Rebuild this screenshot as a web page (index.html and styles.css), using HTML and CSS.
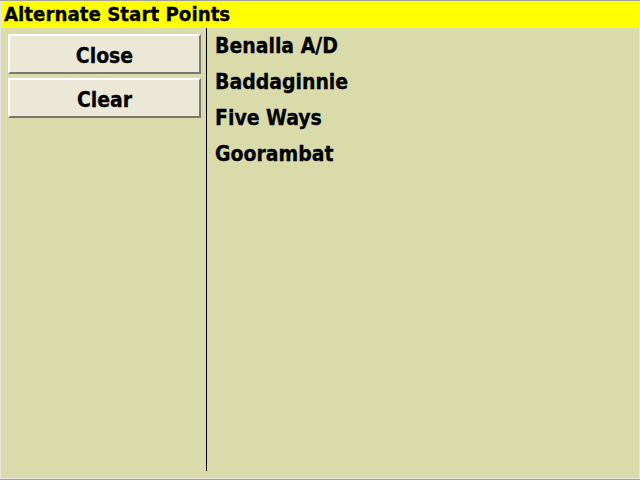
FILE: index.html
```html
<!DOCTYPE html>
<html>
<head>
<meta charset="utf-8">
<link rel="stylesheet" href="styles.css">
</head>
<body>
<div class="window">
  <div class="title">Alternate Start Points</div>
  <div class="content">
    <div class="side">
      <button class="btn">Close</button>
      <button class="btn">Clear</button>
    </div>
    <div class="divider"></div>
    <ul class="list">
      <li>Benalla A/D</li>
      <li>Baddaginnie</li>
      <li>Five Ways</li>
      <li>Goorambat</li>
    </ul>
  </div>
</div>
</body>
</html>
```
FILE: styles.css
```css
html, body {
  margin: 0;
  padding: 0;
  background: #a0a0a0;
  width: 640px;
  height: 480px;
  overflow: hidden;
}
.window {
  margin-top: 1px;
  width: 638px;
  height: 477px;
  border-left: 1px solid #e6e6e0;
  border-right: 1px solid #e6e6e0;
  border-bottom: 1px solid #e6e6e0;
  background: #d9dbab;
  display: flex;
  flex-direction: column;
  font-family: "DejaVu Sans Condensed", "DejaVu Sans", sans-serif;
  font-weight: bold;
  color: #000;
  -webkit-text-stroke: 0.3px #000;
}
.title {
  height: 27px;
  background: #ffff00;
  font-size: 20.3px;
  line-height: 27px;
  padding-left: 3px;
}
.content {
  flex: 1;
  display: flex;
  padding-bottom: 7px;
}
.side {
  width: 205px;
  display: flex;
  flex-direction: column;
  padding: 6px 5px 0 7px;
  box-sizing: border-box;
  gap: 4px;
}
.btn {
  height: 40px;
  width: 193px;
  background: #ebe8d8;
  border: none;
  border-top: 2px solid #ffffff;
  border-left: 2px solid #ffffff;
  border-right: 2px solid #77776f;
  border-bottom: 2px solid #77776f;
  font-family: "DejaVu Sans Condensed", "DejaVu Sans", sans-serif;
  font-weight: bold;
  font-size: 21px;
  color: #000;
  -webkit-text-stroke: 0.3px #000;
  padding: 4px 0 0 0;
}
.divider {
  width: 1px;
  background: #000;
}
.list {
  list-style: none;
  margin: 0;
  padding: 0 0 0 8px;
  font-size: 21px;
}
.list li {
  height: 36px;
  line-height: 36px;
}
```
